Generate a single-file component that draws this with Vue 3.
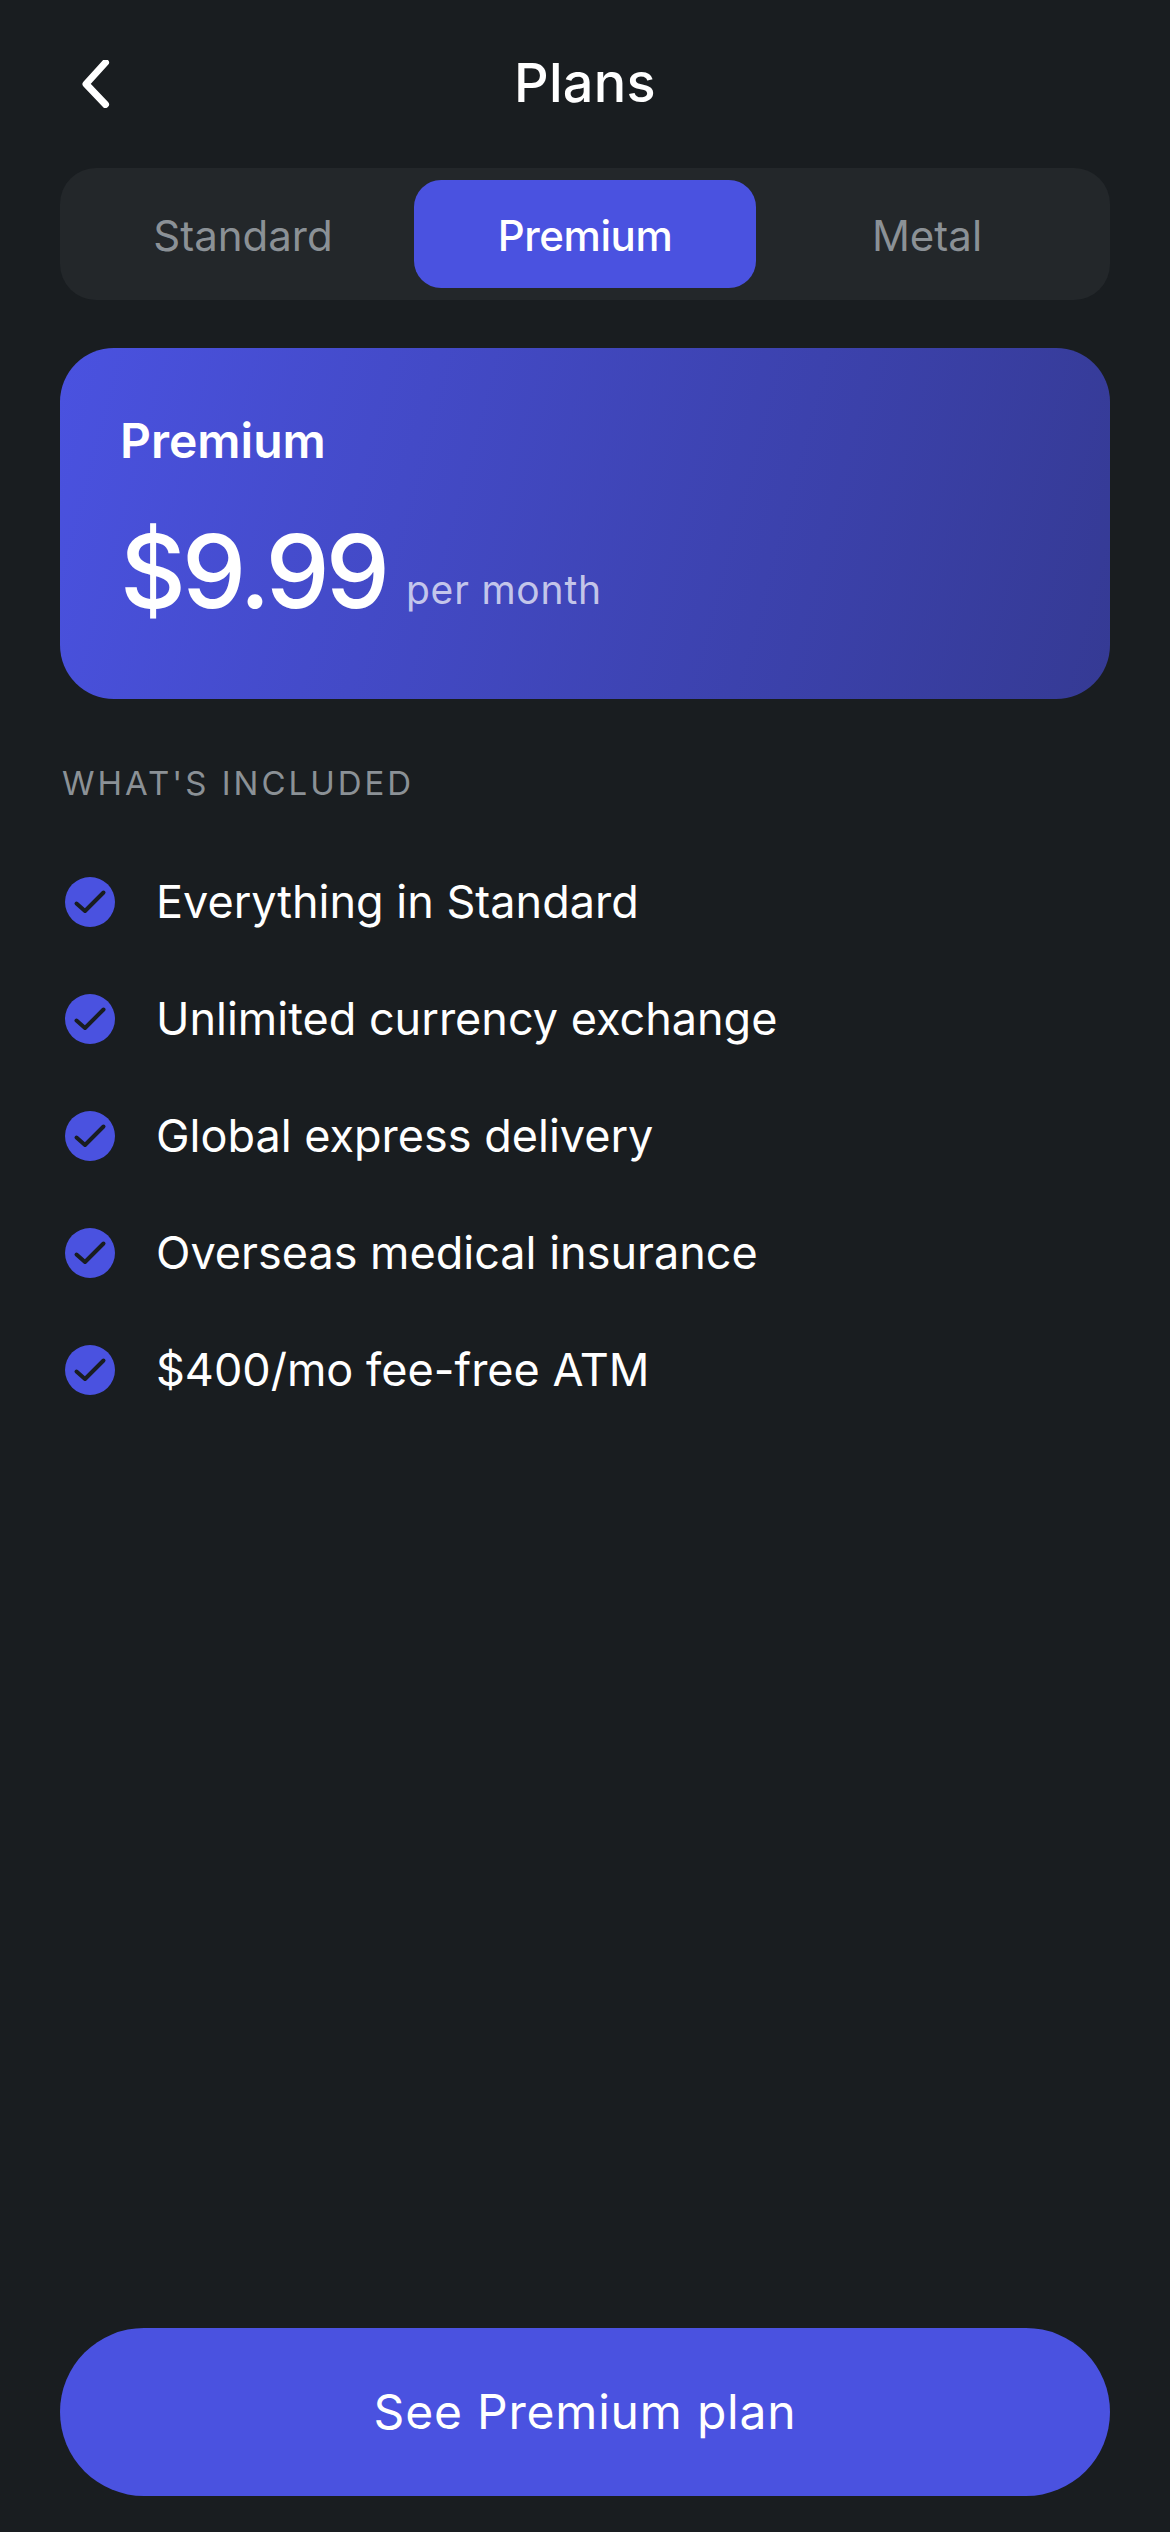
<script setup>
const tabs = [
  { label: 'Standard', active: false },
  { label: 'Premium', active: true },
  { label: 'Metal', active: false },
]
const features = [
  'Everything in Standard',
  'Unlimited currency exchange',
  'Global express delivery',
  'Overseas medical insurance',
  '$400/mo fee-free ATM',
]
</script>

<template>
  <div class="screen">
    <header class="header">
      <svg class="back" width="36" height="48" viewBox="0 0 36 48" fill="none">
        <path d="M28.5 2.5 L9 24 L28.5 44.5" stroke="#fff" stroke-width="7" stroke-linecap="round" stroke-linejoin="round" />
      </svg>
      <h1 class="title">Plans</h1>
    </header>

    <div class="tabs">
      <div v-for="t in tabs" :key="t.label" class="tab" :class="{ active: t.active }">{{ t.label }}</div>
    </div>

    <section class="card">
      <div class="card-name">Premium</div>
      <div class="price-row">
        <span class="price">$9.99</span>
        <span class="period">per month</span>
      </div>
    </section>

    <div class="section-label">WHAT'S INCLUDED</div>

    <ul class="features">
      <li v-for="f in features" :key="f" class="feature">
        <svg class="check" width="54" height="54" viewBox="0 0 54 54">
          <circle cx="27" cy="27" r="25" fill="#4a52e0" />
          <path d="M13.5 28.5 L22 36 L40.5 17.5" fill="none" stroke="#191d20" stroke-width="4" stroke-linecap="round" stroke-linejoin="round" />
        </svg>
        <span>{{ f }}</span>
      </li>
    </ul>

    <button class="cta">See Premium plan</button>
  </div>
</template>

<style>
html, body { margin: 0; background: #191d20; }
</style>

<style scoped>
.screen {
  box-sizing: border-box;
  width: 1170px;
  height: 2532px;
  padding: 0 60px 36px;
  display: flex;
  flex-direction: column;
  background: #191d20;
  color: #fff;
  font-family: Inter, "Liberation Sans", sans-serif;
}
.header {
  height: 168px;
  display: flex;
  align-items: center;
  justify-content: center;
  position: relative;
}
.title {
  margin: 0 0 4px;
  font-size: 54px;
  font-weight: 500;
  letter-spacing: 0.3px;
}
.back {
  position: absolute;
  left: 17px;
  top: 60px;
}
.tabs {
  height: 132px;
  box-sizing: border-box;
  padding: 12px;
  display: grid;
  grid-template-columns: repeat(3, 1fr);
  gap: 0;
  background: #23272a;
  border-radius: 36px;
}
.tab {
  display: flex;
  align-items: center;
  justify-content: center;
  padding-top: 2px;
  border-radius: 27px;
  font-size: 42px;
  font-weight: 400;
  color: #8b9196;
}
.tab.active {
  background: #4a52e0;
  color: #fff;
  font-weight: 500;
  letter-spacing: -0.4px;
}
.card {
  box-sizing: border-box;
  height: 351px;
  margin-top: 48px;
  padding: 64px 60px 0;
  border-radius: 54px;
  background: linear-gradient(105deg, #4a52e0, #353a94);
}
.card-name {
  font-size: 48px;
  font-weight: 600;
  line-height: 58px;
}
.price-row {
  margin-top: 39px;
  display: flex;
  align-items: flex-end;
  gap: 20px;
}
.price {
  font-size: 102px;
  font-weight: 500;
  line-height: 124px;
  letter-spacing: -4px;
}
.period {
  margin-bottom: 20px;
  font-size: 39px;
  letter-spacing: 0.8px;
  color: rgba(255, 255, 255, 0.7);
}
.section-label {
  margin: 64px 0 0 2px;
  font-size: 33px;
  line-height: 40px;
  font-weight: 400;
  letter-spacing: 3px;
  color: #8b9196;
}
.features {
  list-style: none;
  margin: 70px 0 0;
  padding: 0 0 0 3px;
  display: flex;
  flex-direction: column;
  gap: 60px;
}
.feature {
  display: flex;
  align-items: center;
  gap: 39px;
  height: 57px;
  font-size: 45px;
  letter-spacing: 0;
}
.cta {
  margin-top: auto;
  height: 168px;
  border: 0;
  border-radius: 84px;
  background: #4a52e0;
  color: #fff;
  font-family: inherit;
  font-size: 48px;
  font-weight: 400;
  letter-spacing: 0.8px;
  padding-bottom: 2px;
}
</style>
